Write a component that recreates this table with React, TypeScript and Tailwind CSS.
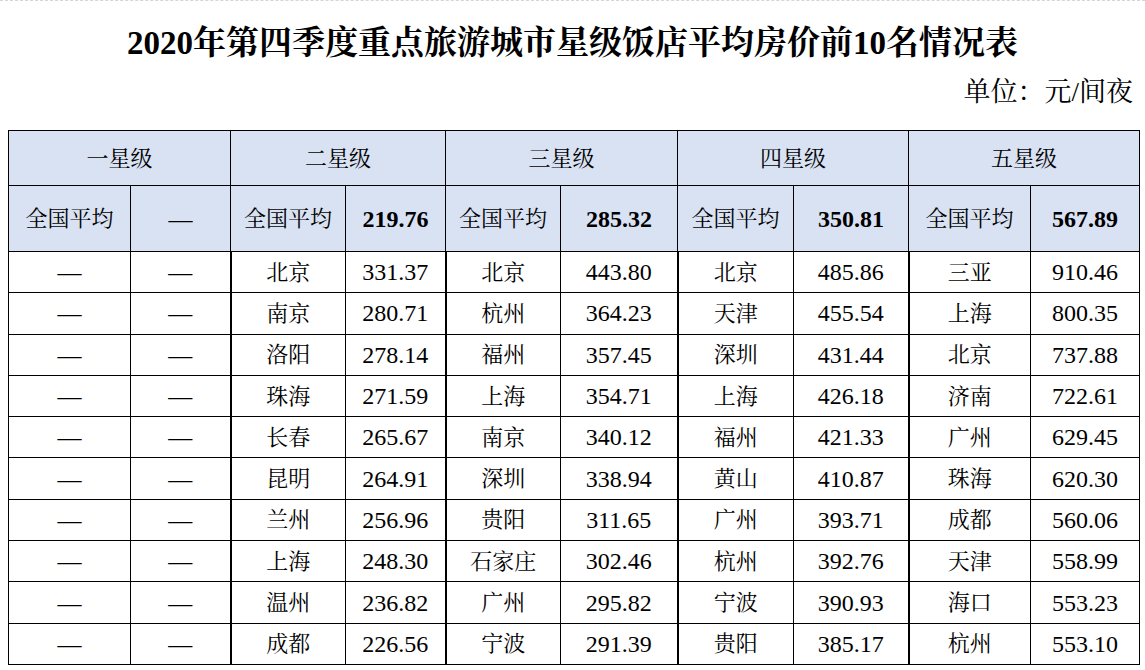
import React from "react";

const groups = [
  { name: "一星级", avg: "—", rows: Array(10).fill(["—", "—"]) },
  {
    name: "二星级",
    avg: "219.76",
    rows: [
      ["北京", "331.37"], ["南京", "280.71"], ["洛阳", "278.14"], ["珠海", "271.59"], ["长春", "265.67"],
      ["昆明", "264.91"], ["兰州", "256.96"], ["上海", "248.30"], ["温州", "236.82"], ["成都", "226.56"],
    ],
  },
  {
    name: "三星级",
    avg: "285.32",
    rows: [
      ["北京", "443.80"], ["杭州", "364.23"], ["福州", "357.45"], ["上海", "354.71"], ["南京", "340.12"],
      ["深圳", "338.94"], ["贵阳", "311.65"], ["石家庄", "302.46"], ["广州", "295.82"], ["宁波", "291.39"],
    ],
  },
  {
    name: "四星级",
    avg: "350.81",
    rows: [
      ["北京", "485.86"], ["天津", "455.54"], ["深圳", "431.44"], ["上海", "426.18"], ["福州", "421.33"],
      ["黄山", "410.87"], ["广州", "393.71"], ["杭州", "392.76"], ["宁波", "390.93"], ["贵阳", "385.17"],
    ],
  },
  {
    name: "五星级",
    avg: "567.89",
    rows: [
      ["三亚", "910.46"], ["上海", "800.35"], ["北京", "737.88"], ["济南", "722.61"], ["广州", "629.45"],
      ["珠海", "620.30"], ["成都", "560.06"], ["天津", "558.99"], ["海口", "553.23"], ["杭州", "553.10"],
    ],
  },
];

const widths = [122, 100, 115, 100, 115, 117, 116, 115, 122, 109];

const font = {
  fontFamily: '"Liberation Serif", "Noto Serif CJK SC", "Noto Sans CJK SC", serif',
};

const cell = "border border-black text-center align-middle p-0";

export default function App() {
  return (
    <div className="w-[1145px] h-[670px] bg-white text-black overflow-hidden border-t border-dashed border-gray-300" style={font}>
      <div className="mt-[22px] text-center text-[33px] leading-[40px] font-bold">
        2020年第四季度重点旅游城市星级饭店平均房价前10名情况表
      </div>
      <div className="mt-[14px] pr-[12px] text-right text-[27px] leading-[30px]">单位：元/间夜</div>
      <table className="mt-[23px] ml-[8px] table-fixed border-collapse text-[22px]" style={{ width: 1132 }}>
        <colgroup>
          {widths.map((w, i) => (
            <col key={i} style={{ width: w }} />
          ))}
        </colgroup>
        <tbody>
          <tr className="h-[55px] bg-[#d9e2f3]">
            {groups.map((g) => (
              <td key={g.name} colSpan={2} className={cell}>
                {g.name}
              </td>
            ))}
          </tr>
          <tr className="h-[66px] bg-[#d9e2f3]">
            {groups.map((g, gi) => (
              <React.Fragment key={g.name}>
                <td className={cell}>全国平均</td>
                <td className={gi === 0 ? cell + " text-[24px]" : cell + " text-[24px] font-bold"}>{g.avg}</td>
              </React.Fragment>
            ))}
          </tr>
          {Array.from({ length: 10 }).map((_, r) => (
            <tr key={r} className="h-[41.3px]">
              {groups.map((g, gi) => (
                <React.Fragment key={g.name}>
                  <td className={gi === 0 ? cell + " text-[24px]" : cell + " border-l-2"}>{g.rows[r][0]}</td>
                  <td className={cell + " text-[24px]"}>{g.rows[r][1]}</td>
                </React.Fragment>
              ))}
            </tr>
          ))}
        </tbody>
      </table>
    </div>
  );
}
